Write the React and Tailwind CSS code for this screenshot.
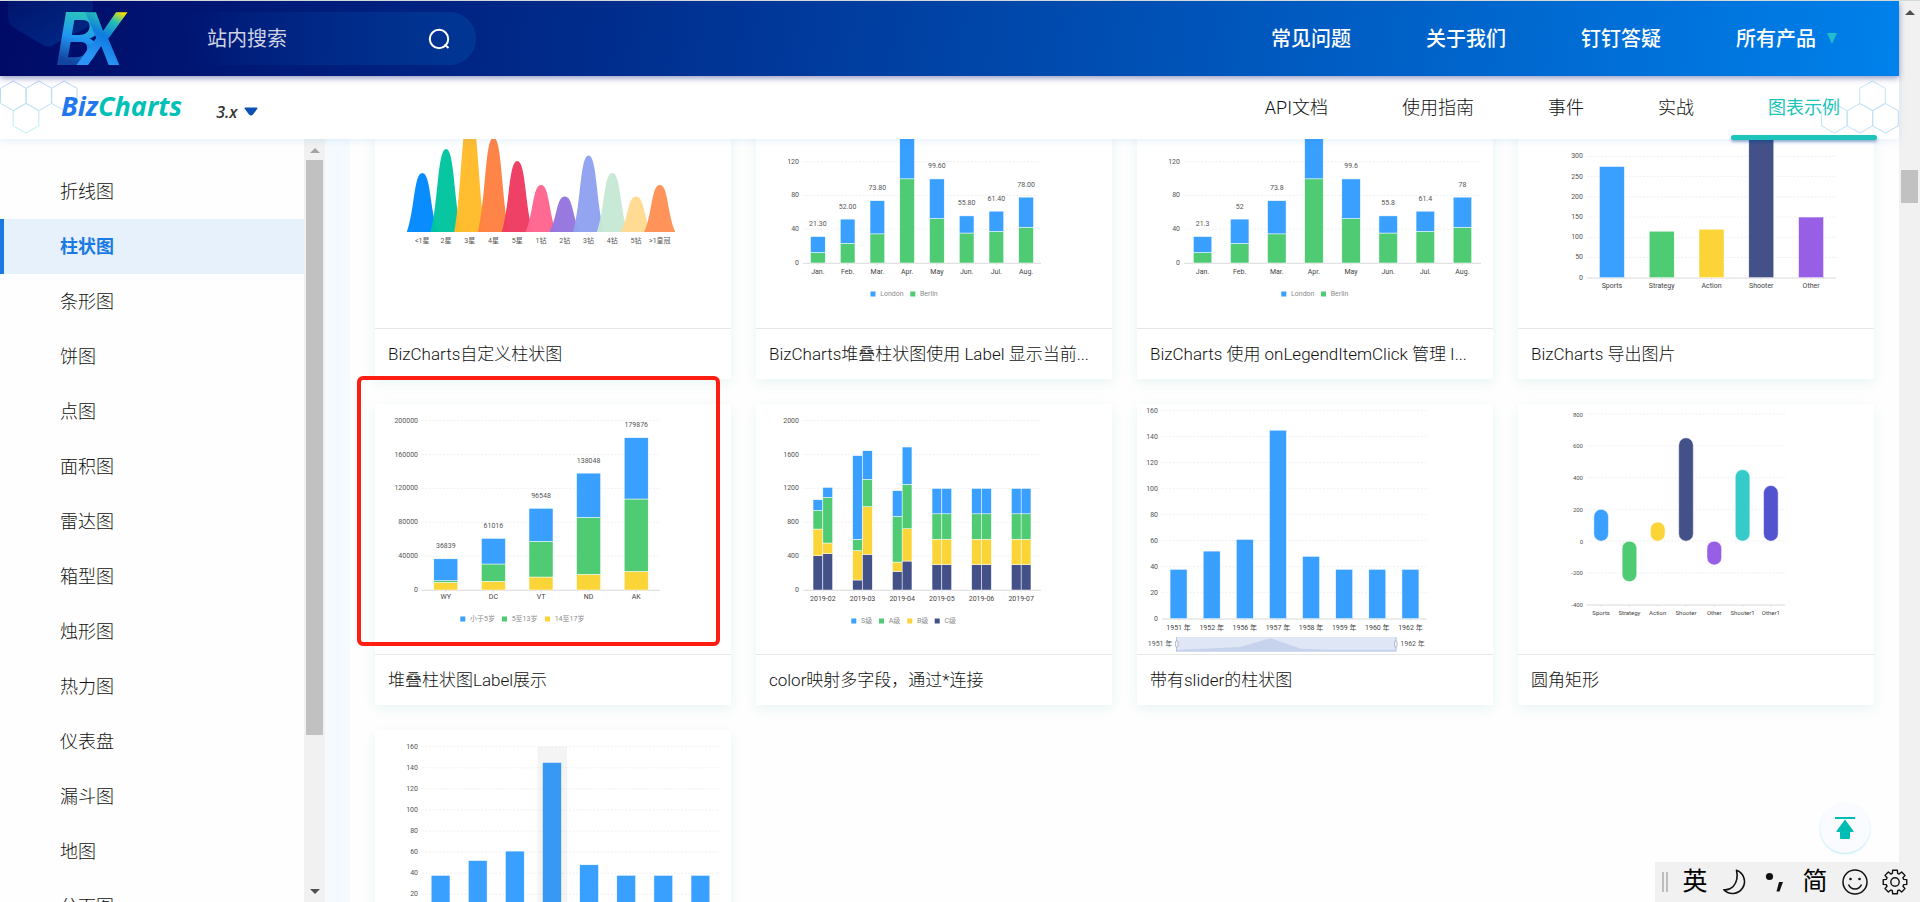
import React from 'react';

const BLUE = '#3aa0ff';
const GREEN = '#4ecb73';
const YELLOW = '#fbd437';
const NAVY = '#435188';
const PURPLE = '#975fe5';
const CYAN = '#36cbcb';
const INDIGO = '#5254cf';

const topLinks = ['常见问题', '关于我们', '钉钉答疑'];
const docTabs = ['API文档', '使用指南', '事件', '实战', '图表示例'];
const categories = [
  '折线图', '柱状图', '条形图', '饼图', '点图', '面积图', '雷达图',
  '箱型图', '烛形图', '热力图', '仪表盘', '漏斗图', '地图', '分面图'
];

const months = ['Jan.', 'Feb.', 'Mar.', 'Apr.', 'May', 'Jun.', 'Jul.', 'Aug.'];
const berlin = [12.4, 23.2, 34.5, 99.7, 52.6, 35.5, 37.4, 42.4];
const london = [18.9, 28.8, 39.3, 81.4, 47, 20.3, 24, 35.6];
const rainfall = months.map((_, i) => [[[berlin[i], GREEN], [london[i], BLUE]]]);

const years = ['1951', '1952', '1956', '1957', '1958', '1959', '1960', '1962'].map((y) => `${y} 年`);
const sales = [38, 52, 61, 145, 48, 38, 38, 38];

// Thumbnails share one coordinate space: 356 x 250, same as the card picture area
const Canvas = ({ children, label }) => (
  <svg
    viewBox="0 0 356 250"
    preserveAspectRatio="xMinYMin meet"
    className="block h-[250px] w-full font-[Roboto,'Noto_Sans_CJK_SC',sans-serif]"
    role="img"
    aria-label={label}
  >
    {children}
  </svg>
);

const Label = ({ x, y, anchor = 'middle', size = 7, fill = '#555', children }) => (
  <text x={x} y={y} textAnchor={anchor} dominantBaseline="central" fontSize={size} fill={fill}>
    {children}
  </text>
);

/**
 * Bar chart thumbnail.
 * groups: one entry per category, each a list of stacks, each stack a list of [value, color]
 */
const BarChart = ({
  label, left = 47, right = 285, top, bottom, min = 0, max, step,
  names, groups, barWidth, totals, nameGap = 9, legend = [], legendY = 216,
  rounded = false, size = 7, children
}) => {
  const y = (v) => bottom - ((v - min) / (max - min)) * (bottom - top);
  const pitch = (right - left) / names.length;
  const ticks = [];
  for (let v = min; v <= max; v += step) ticks.push(v);

  return (
    <Canvas label={label}>
      {ticks.map((v) => (
        <g key={v}>
          {v !== min && <line x1={left} x2={right} y1={y(v)} y2={y(v)} stroke="#ececec" strokeWidth="0.8" strokeDasharray="2 1.5" />}
          <Label x={left - 4} y={y(v)} anchor="end" size={size}>{v}</Label>
        </g>
      ))}
      <line x1={left} x2={right} y1={bottom + 0.3} y2={bottom + 0.3} stroke="#d6d6d6" strokeWidth="0.9" />

      {names.map((name, i) => {
        const cx = left + pitch * (i + 0.5);
        const stacks = groups[i];
        const total = stacks[0].reduce((a, b) => a + b[0], 0);
        return (
          <g key={name}>
            {stacks.map((stack, s) => {
              const x = cx - (barWidth * stacks.length) / 2 + s * barWidth;
              let sum = 0;
              return stack.map(([value, color], k) => {
                const from = y(sum);
                sum += value;
                const to = y(sum);
                return (
                  <rect
                    key={k}
                    x={x}
                    y={Math.min(from, to)}
                    width={barWidth}
                    height={Math.abs(from - to)}
                    rx={rounded ? barWidth / 2 : 0}
                    fill={color}
                    stroke="#fff"
                    strokeWidth="0.5"
                  />
                );
              });
            })}
            {totals && <Label x={cx} y={y(total) - 12.5}>{totals[i]}</Label>}
            <line x1={cx} x2={cx} y1={bottom} y2={bottom + 2} stroke="#d6d6d6" strokeWidth="0.7" />
            <Label x={cx} y={bottom + nameGap} size={size} fill="#444">{name}</Label>
          </g>
        );
      })}

      {legend.map(([text, color, x]) => (
        <g key={text}>
          <rect x={x} y={legendY - 2.5} width="5" height="5" fill={color} />
          <Label x={x + 9.7} y={legendY} anchor="start" fill="#8c8c8c">{text}</Label>
        </g>
      ))}
      {children}
    </Canvas>
  );
};

const bells = [
  ['<1星', 59, '#0088fe'], ['2星', 83, '#00c49f'], ['3星', 118, '#ffbb28'], ['4星', 94.5, '#ff8042'],
  ['5星', 71, '#ee3b61'], ['1钻', 47, '#ff6590'], ['2钻', 35.5, '#9575de'], ['3钻', 76.5, '#8fa2f0'],
  ['4钻', 59, '#c6e8d5'], ['5钻', 35.5, '#ffda8f'], ['>1皇冠', 47, '#ff9054']
];

const BellChart = () => (
  <Canvas label="自定义柱状图">
    {bells.map(([name, h, color], i) => {
      const x = 47.3 + i * 23.75;
      const b = 154;
      return (
        <g key={name}>
          <path
            d={`M${x - 15.5} ${b} C${x - 7.5} ${b - h * 0.38} ${x - 8.5} ${b - h} ${x} ${b - h} C${x + 8.5} ${b - h} ${x + 7.5} ${b - h * 0.38} ${x + 15.5} ${b}Z`}
            fill={color}
            fillOpacity="0.97"
          />
          <Label x={x} y={163}>{name}</Label>
        </g>
      );
    })}
  </Canvas>
);

const one = (value, color) => [[[value, color]]];

// Layers are cumulative, bottom to top: C, B, A, S
const grades = [
  [[405, 720, 940, 1066], [430, 555, 1094, 1212]],
  [[118, 465, 598, 1587], [421, 984, 1307, 1645]],
  [[220, 330, 870, 1173], [342, 724, 1248, 1689]],
  [[300, 600, 900, 1200], [300, 600, 900, 1200]],
  [[300, 600, 900, 1200], [300, 600, 900, 1200]],
  [[300, 600, 900, 1200], [300, 600, 900, 1200]]
].map((group) => group.map((stack) => stack.map((v, i) => [v - (stack[i - 1] || 0), [NAVY, YELLOW, GREEN, BLUE][i]])));

const ages = [
  [9055, 1945, 25839],
  [10236, 20464, 30316],
  [15350, 42150, 39048],
  [18500, 67300, 52248],
  [22000, 85500, 72376]
].map((v) => [[[v[0], YELLOW], [v[1], GREEN], [v[2], BLUE]]]);

const cards = [
  { title: 'BizCharts自定义柱状图', chart: <BellChart /> },
  {
    title: 'BizCharts堆叠柱状图使用 Label 显示当前...',
    chart: (
      <BarChart
        label="London Berlin" top={83.7} bottom={185} max={120} step={40} names={months} groups={rainfall}
        barWidth={14.7} totals={['21.30', '52.00', '73.80', '', '99.60', '55.80', '61.40', '78.00']}
        legend={[['London', BLUE, 114.5], ['Berlin', GREEN, 154.3]]}
      />
    )
  },
  {
    title: 'BizCharts 使用 onLegendItemClick 管理 I...',
    chart: (
      <BarChart
        label="London Berlin" right={344} top={83.7} bottom={185} max={120} step={40} names={months} groups={rainfall}
        barWidth={18.5} totals={['21.3', '52', '73.8', '', '99.6', '55.8', '61.4', '78']}
        legend={[['London', BLUE, 144.3], ['Berlin', GREEN, 184]]}
      />
    )
  },
  {
    title: 'BizCharts 导出图片',
    chart: (
      <BarChart
        label="导出图片" left={69} right={318} top={78.4} bottom={199.7} max={300} step={50} barWidth={25} nameGap={8}
        names={['Sports', 'Strategy', 'Action', 'Shooter', 'Other']}
        groups={[one(275, BLUE), one(115, GREEN), one(120, YELLOW), one(350, NAVY), one(150, PURPLE)]}
      />
    )
  },
  {
    title: '堆叠柱状图Label展示',
    marked: true,
    chart: (
      <BarChart
        label="堆叠柱状图" top={16.7} bottom={186} max={200000} step={40000} barWidth={24} nameGap={7}
        names={['WY', 'DC', 'VT', 'ND', 'AK']} groups={ages} totals={[36839, 61016, 96548, 138048, 179876]}
        legend={[['小于5岁', BLUE, 85.3], ['5至13岁', GREEN, 127], ['14至17岁', YELLOW, 170]]} legendY={215}
      />
    )
  },
  {
    title: 'color映射多字段，通过*连接',
    chart: (
      <BarChart
        label="多字段" top={16.7} bottom={186} max={2000} step={400} barWidth={9.8}
        names={['2019-02', '2019-03', '2019-04', '2019-05', '2019-06', '2019-07']} groups={grades}
        legend={[['S级', BLUE, 95.3], ['A级', GREEN, 123], ['B级', YELLOW, 151.3], ['C级', NAVY, 178.7]]} legendY={217}
      />
    )
  },
  {
    title: '带有slider的柱状图',
    chart: (
      <BarChart
        label="slider" left={25} right={290} top={6.7} bottom={214.7} max={160} step={20} barWidth={17}
        names={years} groups={sales.map((v) => one(v, BLUE))}
      >
        <rect x="39" y="233" width="220.5" height="14.5" fill="#dfe6f6" />
        <path d="M39 246 L103 243 L133.7 234.3 L164 244.7 L190 245.7 L259 245.7 V247.7 H39Z" fill="#c7d2ec" />
        <path d="M39.5 233V247.5M259 233V247.5" stroke="#b9c5e4" />
        <rect x="38.5" y="237" width="2.6" height="6" rx="1" fill="#f2f4fa" stroke="#8e98b5" strokeWidth="0.6" />
        <rect x="257.5" y="237" width="2.6" height="6" rx="1" fill="#f2f4fa" stroke="#8e98b5" strokeWidth="0.6" />
        <Label x={35.3} y={240} anchor="end">1951 年</Label>
        <Label x={263.3} y={240} anchor="start">1962 年</Label>
      </BarChart>
    )
  },
  {
    title: '圆角矩形',
    chart: (
      <BarChart
        label="圆角矩形" left={69} right={267} top={10} bottom={200.7} min={-400} max={800} step={200} barWidth={14.6}
        nameGap={8} size={6} rounded
        names={['Sports', 'Strategy', 'Action', 'Shooter', 'Other', 'Shooter1', 'Other1']}
        groups={[
          one(200, BLUE), one(-255, GREEN), one(120, YELLOW), one(650, NAVY),
          one(-150, PURPLE), one(450, CYAN), one(350, INDIGO)
        ]}
      />
    )
  },
  {
    title: '基础柱状图',
    chart: (
      <BarChart
        label="基础柱状图" right={344} top={16.7} bottom={185.4} max={160} step={20} barWidth={18.8}
        names={years} groups={sales.map((v) => one(v, BLUE))}
      >
        <rect x="162.5" y="16.7" width="29.5" height="168.7" fill="#000" fillOpacity="0.045" />
      </BarChart>
    )
  }
];

const hexagon = (cx, top) =>
  `M${cx} ${top} l12.8 7.3 v15 l-12.8 7.3 l-12.8 -7.3 v-15Z`;

const Hexagons = ({ flipped, className }) => (
  <svg width="78" height="54" viewBox="0 0 78 54" className={className} fill="none" aria-hidden="true">
    <defs>
      <linearGradient id={flipped ? 'hexR' : 'hexL'} x1="0" y1="0" x2={flipped ? '1' : '0'} y2="1">
        <stop offset="0" stopColor={flipped ? '#bff0f0' : '#b9d4f8'} />
        <stop offset="1" stopColor={flipped ? '#bcd8fa' : '#bdf1ee'} />
      </linearGradient>
    </defs>
    <g stroke={flipped ? 'url(#hexR)' : 'url(#hexL)'}>
      {flipped ? (
        <path d={`${hexagon(51.5, 1)} ${hexagon(13.3, 23.5)} ${hexagon(38.9, 23.5)} ${hexagon(64.5, 23.5)}`} />
      ) : (
        <path d={`${hexagon(13.3, 1)} ${hexagon(38.9, 1)} ${hexagon(64.2, 1)} ${hexagon(26, 23.5)}`} />
      )}
    </g>
  </svg>
);

const Logo = () => (
  <svg width="68" height="54" viewBox="0 0 68 54" role="img" aria-label="BX" className="relative overflow-visible">
    <defs>
      <linearGradient id="logoB" gradientUnits="userSpaceOnUse" x1="30" y1="0" x2="16" y2="54">
        <stop offset="0.05" stopColor="#2ac3bd" />
        <stop offset="0.5" stopColor="#2196f3" />
        <stop offset="0.95" stopColor="#12459f" />
      </linearGradient>
      <linearGradient id="logoX" gradientUnits="userSpaceOnUse" x1="66" y1="0" x2="38" y2="54">
        <stop offset="0.03" stopColor="#f5e100" />
        <stop offset="0.22" stopColor="#25c0b4" />
        <stop offset="0.5" stopColor="#0f7be0" />
        <stop offset="0.9" stopColor="#2b95f5" />
      </linearGradient>
    </defs>
    <g fontFamily="Roboto, sans-serif" fontStyle="italic" fontWeight="600" fontSize="73">
      <text x="-3" y="53" fill="url(#logoB)">B</text>
      <text x="20" y="53" fill="url(#logoX)">X</text>
    </g>
  </svg>
);

const TopBar = () => (
  <header className="relative z-30 flex h-[75px] shrink-0 items-center bg-[linear-gradient(98deg,#000a66_0%,#002d8d_32%,#0055ba_64%,#0081eb_100%)] pr-[62px] pl-[59px] shadow-[0_2px_6px_rgba(0,20,120,0.45)]">
    <svg width="96" height="48" className="absolute top-0 left-0" aria-hidden="true">
      <defs>
        <linearGradient id="corner" x1="0" y1="0" x2="1" y2="1">
          <stop offset="0" stopColor="#00156e" />
          <stop offset="1" stopColor="#002a88" />
        </linearGradient>
      </defs>
      <path d="M8 0 V16 Q8 22 13 26 L43 44 Q48 47 53 44 L88 26 Q93 23 93 17 V0Z" fill="url(#corner)" />
    </svg>
    <a href="#home" aria-label="BX"><Logo /></a>

    <form className="ml-[60px] flex h-[53px] w-[289px] items-center rounded-r-full bg-linear-to-r from-transparent to-[#003694] pr-[26px] pl-5">
      <input
        type="search"
        aria-label="站内搜索"
        placeholder="站内搜索"
        className="min-w-0 flex-1 bg-transparent text-xl text-white outline-none placeholder:text-[#cfd4e4]"
      />
      <button type="button" aria-label="搜索">
        <svg width="22" height="22" viewBox="0 0 22 22" fill="none" stroke="#fff" strokeWidth="2">
          <circle cx="11" cy="11" r="9.2" />
          <path d="M16.5 16.5 L20.5 20" />
        </svg>
      </button>
    </form>

    <nav className="ml-auto flex items-center gap-[75px] text-xl font-medium text-white">
      {topLinks.map((link) => (
        <a key={link} href={`#${link}`}>{link}</a>
      ))}
      <button type="button" className="flex items-center gap-[11px]">
        所有产品
        <svg width="10" height="11" aria-hidden="true">
          <path d="M0 0H10L5 11Z" fill="#1fbccb" />
        </svg>
      </button>
    </nav>
  </header>
);

const DocBar = () => (
  <div className="relative z-20 flex h-[63px] shrink-0 bg-white pr-[22px] pl-[61px] shadow-[0_2px_8px_rgba(30,120,220,0.1)]">
    <Hexagons className="absolute top-1 left-0" />
    <Hexagons flipped className="absolute top-1 right-0" />
    <a href="#bizcharts" className="relative self-center pb-1 font-['Open_Sans',sans-serif] text-[27px] leading-9 font-bold text-[#00c1b6] italic">
      <span className="text-[#2277ee]">Biz</span>Charts
    </a>
    <label className="relative ml-[34px] flex items-center gap-1 pt-2">
      <select aria-label="版本" className="w-6 appearance-none bg-transparent font-['Open_Sans',sans-serif] text-base font-semibold text-[#333] italic">
        <option>3.x</option>
      </select>
      <svg width="14" height="9" aria-hidden="true">
        <path d="M0.5 1.5 Q0.5 0.5 1.5 0.5H12.5Q13.5 0.5 13.5 1.5L9 7.5Q7 9.5 5 7.5Z" fill="#0c50b4" />
      </svg>
    </label>

    <nav className="relative ml-auto flex text-lg font-light text-[#111]">
      {docTabs.map((tab) => (
        <a
          key={tab}
          href={`#${tab}`}
          className={`relative flex items-center px-[37px] ${tab === '图表示例' ? 'font-normal text-[#1cc4ba]' : ''}`}
        >
          {tab}
          {tab === '图表示例' && (
            <span className="absolute inset-x-0 -bottom-px h-[5px] rounded-sm bg-[#1cc4ba] shadow-[0_2px_3px_rgba(0,60,140,0.4)]" />
          )}
        </a>
      ))}
    </nav>
  </div>
);

const Arrow = ({ down, className }) => (
  <svg width="10" height="5" className={className} aria-hidden="true">
    <path d={down ? 'M0 0H10L5 5Z' : 'M0 5H10L5 0Z'} fill="currentColor" />
  </svg>
);

const Sidebar = () => (
  <aside className="flex w-[325px] shrink-0">
    <ul className="h-full flex-1 overflow-hidden pt-[25px] text-lg">
      {categories.map((name) => (
        <li key={name}>
          <a
            href={`#${name}`}
            className={`flex h-[55px] items-center border-l-4 pl-14 ${
              name === '柱状图'
                ? 'border-[#1a7ae2] bg-[#e6f1fc] font-bold text-[#1a7ae2]'
                : 'border-transparent font-light text-[#111]'
            }`}
          >
            {name}
          </a>
        </li>
      ))}
    </ul>
    <div className="flex w-[21px] flex-col items-center bg-[#f1f1f1] pt-[9px] pb-2" aria-hidden="true">
      <Arrow className="text-[#a3a3a3]" />
      <div className="mt-[7px] h-[575px] w-[17px] bg-[#c1c1c1]" />
      <Arrow down className="mt-auto text-[#505050]" />
    </div>
  </aside>
);

const Card = ({ card }) => (
  <a href={`#${card.title}`} className="relative block min-w-0 bg-white shadow-[0_4px_12px_rgba(20,160,130,0.09)]">
    {card.chart}
    <p className="truncate border-t border-[#e6e6e6] px-[13px] text-[17px] leading-[50px] font-light text-[#111]">
      {card.title}
    </p>
    {card.marked && (
      <span className="absolute -top-7 right-[11px] -left-[18px] h-[270px] rounded-md border-4 border-[#ff1f12]" />
    )}
  </a>
);

const BackToTop = () => (
  <button
    type="button"
    aria-label="回到顶部"
    className="fixed right-[50px] bottom-[49px] z-30 flex size-[50px] items-center justify-center rounded-full bg-[#f9fbff] shadow-[0_1px_2px_rgba(0,190,220,0.3)]"
  >
    <svg width="20" height="22" viewBox="0 0 20 22" fill="#00bdb3">
      <rect width="20" height="2" />
      <path d="M10 2.5 L18.5 14 Q18.8 15 17.8 15 H15 V21 Q15 22 14 22 H6 Q5 22 5 21 V15 H2.2 Q1.2 15 1.5 14Z" />
    </svg>
  </button>
);

const gearPath = () => {
  // Eight teeth around a round body
  const pts = [];
  for (let i = 0; i < 8; i++) {
    [[-0.3, 9], [-0.2, 12], [0.2, 12], [0.3, 9]].forEach(([da, r]) => {
      const a = (i * Math.PI) / 4 + da;
      pts.push(`${(13 + r * Math.sin(a)).toFixed(2)} ${(13 - r * Math.cos(a)).toFixed(2)}`);
    });
  }
  return `M${pts.join('L')}Z`;
};

const imeKey = 'flex w-10 items-center justify-center';

const ImeBar = () => (
  <div className="fixed right-0 bottom-0 z-40 flex h-10 bg-[#f1f1f1] pr-[5px] text-[25px] text-black" role="toolbar" aria-label="输入法">
    <span className="mx-[7px] my-[10px] w-[6px] border-x-2 border-[#bdbdbd]" />
    <button type="button" className={imeKey}>英</button>
    <button type="button" className={imeKey} aria-label="半角">
      <svg width="26" height="26" viewBox="0 0 26 26" fill="none" stroke="#111" strokeWidth="1.6" strokeLinejoin="round">
        <path d="M14.5 1.2 A12 12 0 1 1 1.8 20.8 Q7 21.5 11.2 17.5 Q16.8 11 14.5 1.2Z" />
      </svg>
    </button>
    <button type="button" className={imeKey} aria-label="标点">
      <svg width="26" height="26" viewBox="0 0 26 26" fill="#111">
        <circle cx="7.5" cy="7.5" r="3.6" />
        <path d="M17 13H21L17.5 22.5H14.5Z" />
      </svg>
    </button>
    <button type="button" className={imeKey}>简</button>
    <button type="button" className={imeKey} aria-label="表情">
      <svg width="26" height="26" viewBox="0 0 26 26" fill="none" stroke="#111" strokeWidth="1.5">
        <circle cx="13" cy="13" r="12" />
        <path d="M6.5 15.5 Q8.5 20 13 20 Q17.5 20 19.5 15.5" />
        <circle cx="8.5" cy="10" r="1.3" fill="#111" stroke="none" />
        <circle cx="17.5" cy="10" r="1.3" fill="#111" stroke="none" />
      </svg>
    </button>
    <button type="button" className={imeKey} aria-label="设置">
      <svg width="26" height="26" viewBox="0 0 26 26" fill="none" stroke="#111" strokeWidth="1.4" strokeLinejoin="round">
        <path d={gearPath()} />
        <circle cx="13" cy="13" r="4.2" />
      </svg>
    </button>
  </div>
);

const App = () => (
  <div className="flex h-screen overflow-hidden border-t border-[#d3d8da] bg-[#fefefe] font-[Roboto,'Noto_Sans_CJK_SC',sans-serif]">
    <div className="flex min-w-0 flex-1 flex-col">
      <TopBar />
      <DocBar />
      <div className="flex min-h-0 flex-1">
        <Sidebar />
        <main className="min-w-0 flex-1 overflow-hidden border-l-[25px] border-[#f5fafe]">
          {/* The gallery is scrolled part of the way through its first row */}
          <div className="-mt-[61px] grid grid-cols-4 gap-[25px] px-[25px]">
            {cards.map((card) => (
              <Card key={card.title} card={card} />
            ))}
          </div>
        </main>
      </div>
    </div>

    <div className="flex w-[21px] shrink-0 flex-col items-center bg-[#f1f1f1] pt-[9px]" aria-hidden="true">
      <Arrow className="text-[#505050]" />
      <div className="mt-[155px] h-[33px] w-[17px] bg-[#c1c1c1]" />
    </div>

    <BackToTop />
    <ImeBar />
  </div>
);

export default App;
